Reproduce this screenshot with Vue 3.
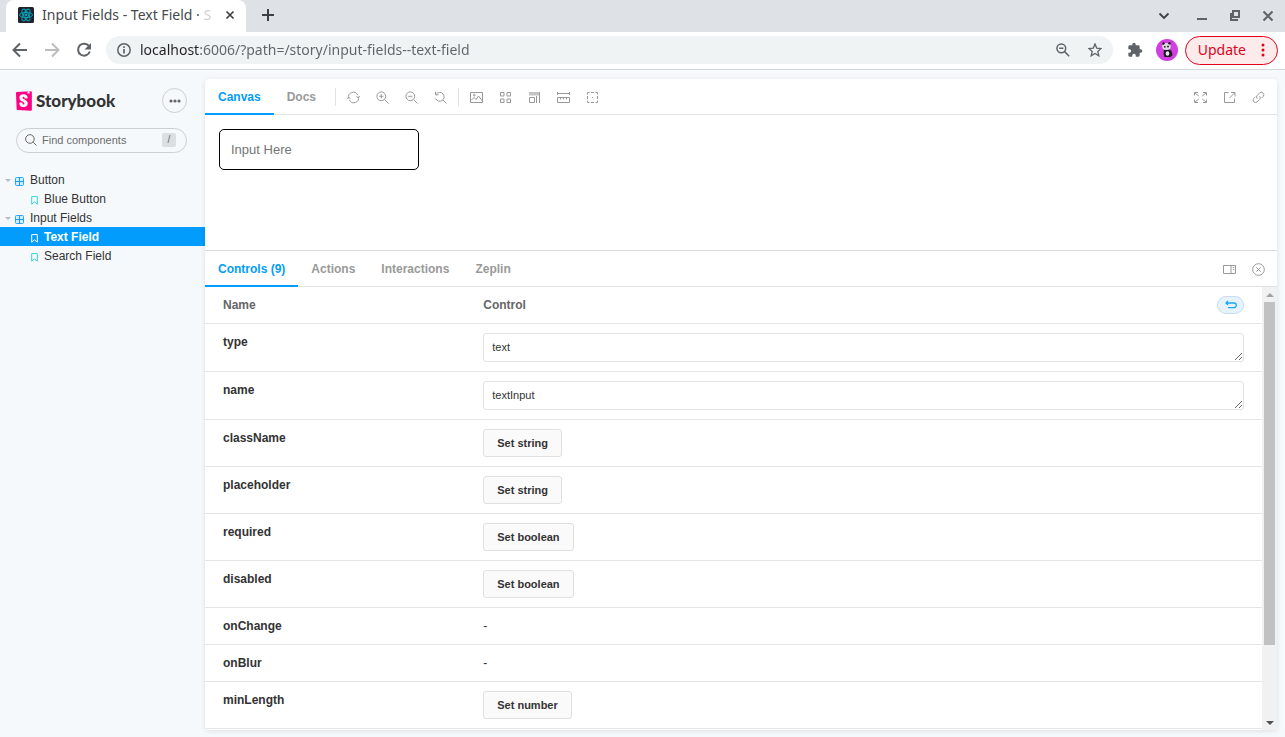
<script setup>
import { ref } from 'vue'

const query = ref('')
const address = ref('localhost:6006/?path=/story/input-fields--text-field')
const sample = ref('')

const tree = [
  { label: 'Button', kind: 'group' },
  { label: 'Blue Button', kind: 'story' },
  { label: 'Input Fields', kind: 'group' },
  { label: 'Text Field', kind: 'story', active: true },
  { label: 'Search Field', kind: 'story' },
]

const zoomTools = [
  { name: 'Remount component', d: 'M1.700 7.500A4.800 4.800 0 0 1 10.700 4.200M11.300 5.500A4.800 4.800 0 0 1 2.300 8.800M.2 7.800L1.700 6l1.700 1.800M9.600 5.200L11.300 7l1.500-1.800' },
  { name: 'Zoom in', d: 'M9.7 5.3a4.4 4.4 0 1 1-8.8 0a4.4 4.4 0 0 1 8.8 0M8.6 8.6l3.9 3.9M5.3 3.2v4.2M3.2 5.3h4.2' },
  { name: 'Zoom out', d: 'M9.7 5.3a4.4 4.4 0 1 1-8.8 0a4.4 4.4 0 0 1 8.8 0M8.6 8.6l3.9 3.9M3.2 5.3h4.2' },
  { name: 'Reset zoom', d: 'M2.2 3.2a4.4 4.4 0 1 1-.6 4.2M8.8 8.8l3.7 3.7M1.5.8v3h3' },
]
const viewTools = [
  { name: 'Change background', d: 'M.5 1.5h12v10H.5zM1 9.5l3-3 2 2 2.5-3.5 3.5 4.5M5.2 4.2a.9.9 0 1 1-1.8 0a.9.9 0 0 1 1.8 0' },
  { name: 'Apply grid', d: 'M1.5 1.5h3.5v3.5h-3.5zM8 1.5h3.5v3.5h-3.5zM1.5 8h3.5v3.5h-3.5zM8 8h3.5v3.5h-3.5z' },
  { name: 'Change viewport', d: 'M1.5 6.5h5v5h-5zM8.5 12V5M11.5 12V1', fill: 'M1 1h11v3.5H1z' },
  { name: 'Enable measure', d: 'M.5 6.5h12v5H.5zM3.5 6.5v2M6.5 6.5v2M9.5 6.5v2M.5 1v3M12.5 1v3M.5 2.5h12' },
  { name: 'Apply outlines', d: 'M1.5 3.5v-2h2M5 1.5h3M9.5 1.5h2v2M11.5 5v3M11.5 9.5v2h-2M8 11.500H5M3.5 11.5h-2v-2M1.500 8V5M6 6.500h1' },
]
const shareTools = [
  { name: 'Go full screen', d: 'M.5 4.500V1.500h3.500M1 2l3.800 3M9 1.500h3.500v3M12 2L8.200 5M.5 8.500v3h3.500M1 11l3.800-3M9 11.500h3.500v-3M12 11L8.200 8' },
  { name: 'Open canvas in new tab', d: 'M5.5 1.5h-4v10h10v-4M8 1.5h4v4M11.5 2L6.5 7' },
  { name: 'Copy canvas link', d: 'M5.3 7.7a2.4 2.4 0 0 1 0-3.4l2.5-2.5a2.5 2.5 0 0 1 3.5 3.5L9.5 7.1M7.5 5.2a2.4 2.4 0 0 1 0 3.4L5.1 11a2.5 2.5 0 0 1-3.5-3.5l1.7-1.7' },
]

const panels = ['Controls (9)', 'Actions', 'Interactions', 'Zeplin']
const args = ref([
  { name: 'type', kind: 'text', value: 'text' },
  { name: 'name', kind: 'text', value: 'textInput' },
  { name: 'className', kind: 'set', action: 'Set string' },
  { name: 'placeholder', kind: 'set', action: 'Set string' },
  { name: 'required', kind: 'set', action: 'Set boolean' },
  { name: 'disabled', kind: 'set', action: 'Set boolean' },
  { name: 'onChange', kind: 'none' },
  { name: 'onBlur', kind: 'none' },
  { name: 'minLength', kind: 'set', action: 'Set number' },
])
</script>

<template>
  <div class="window">
    <header class="tabstrip">
      <div class="page-tab">
        <svg class="favicon" viewBox="0 0 16 16" aria-hidden="true">
          <rect width="16" height="16" rx="1.5" fill="#20232a" />
          <g fill="none" stroke="#00a5bd" stroke-width="1">
            <ellipse cx="8" cy="8" rx="6.5" ry="2.6" />
            <ellipse cx="8" cy="8" rx="6.5" ry="2.6" transform="rotate(60 8 8)" />
            <ellipse cx="8" cy="8" rx="6.5" ry="2.6" transform="rotate(120 8 8)" />
          </g>
          <circle cx="8" cy="8" r="1.4" fill="#00a5bd" />
        </svg>
        <span class="page-title">Input Fields - Text Field · <span class="fade">S</span></span>
        <button class="bare" aria-label="Close tab">
          <svg width="10" height="10" viewBox="0 0 10 10"><path d="M1.5 1.5l7 7M8.5 1.5l-7 7" stroke="#3c4043" stroke-width="1.7" /></svg>
        </button>
      </div>
      <button class="bare new-tab" aria-label="New tab">
        <svg width="14" height="14" viewBox="0 0 14 14"><path d="M7 1v12M1 7h12" stroke="#3c4043" stroke-width="2" /></svg>
      </button>
      <div class="window-buttons">
        <button class="bare" aria-label="Search tabs"><svg width="12" height="12" viewBox="0 0 12 12"><path d="M1.5 3.5L6 8l4.500-4.500" fill="none" stroke="#3c4043" stroke-width="1.8" /></svg></button>
        <button class="bare" aria-label="Minimize"><svg width="12" height="12" viewBox="0 0 12 12"><path d="M1 9h10" stroke="#5f6368" stroke-width="2" /></svg></button>
        <button class="bare" aria-label="Restore"><svg width="12" height="12" viewBox="0 0 12 12"><path d="M4 1h6v6H4zM2 3v7h7" fill="none" stroke="#5f6368" stroke-width="2" /></svg></button>
        <button class="bare" aria-label="Close"><svg width="12" height="12" viewBox="0 0 12 12"><path d="M1.5 1.5l9 9M10.5 1.5l-9 9" stroke="#5f6368" stroke-width="2" /></svg></button>
      </div>
    </header>

    <div class="toolbar">
      <nav class="history">
        <button class="bare" aria-label="Back"><svg width="16" height="16" viewBox="0 0 16 16"><path d="M15 8H2M8 1.5L1.5 8 8 14.5" fill="none" stroke="#5f6368" stroke-width="2" /></svg></button>
        <button class="bare" aria-label="Forward"><svg width="16" height="16" viewBox="0 0 16 16"><path d="M1 8h13M8 1.5L14.5 8 8 14.5" fill="none" stroke="#babcbe" stroke-width="2" /></svg></button>
        <button class="bare" aria-label="Reload"><svg width="16" height="16" viewBox="0 0 16 16"><path d="M13.3 4.7A6 6 0 1 0 13.8 9.5" fill="none" stroke="#5f6368" stroke-width="2" /><path d="M15 1v6.500H8.500z" fill="#5f6368" /></svg></button>
      </nav>
      <div class="omnibox">
        <svg width="14" height="14" viewBox="0 0 14 14" aria-hidden="true"><circle cx="7" cy="7" r="6.2" fill="none" stroke="#5f6368" stroke-width="1.5" /><path d="M7 6v4.500M7 3.300v1.600" stroke="#5f6368" stroke-width="1.7" /></svg>
        <input v-model="address" class="address" type="text" aria-label="Address" spellcheck="false" />
        <button class="bare" aria-label="Zoom level"><svg width="14" height="14" viewBox="0 0 14 14"><circle cx="5.3" cy="5.3" r="4.4" fill="none" stroke="#5f6368" stroke-width="1.5" /><path d="M8.6 8.6l4.6 4.6M3.2 5.3h4.2" stroke="#5f6368" stroke-width="1.5" /></svg></button>
        <button class="bare" aria-label="Bookmark this page"><svg width="14" height="14" viewBox="0 0 14 14"><path d="M7 1l1.700 4.100 4.400.4-3.300 2.900 1 4.400L7 10.500l-3.800 2.300 1-4.400L.9 5.500l4.400-.4z" fill="none" stroke="#5f6368" stroke-width="1.3" /></svg></button>
      </div>
      <button class="bare" aria-label="Extensions">
        <svg width="16" height="16" viewBox="0 0 24 24"><path fill="#5f6368" d="M20.5 11H19V7a2 2 0 0 0-2-2h-4V3.500a2.500 2.500 0 0 0-5 0V5H4a2 2 0 0 0-2 2v3.800h1.500a2.700 2.700 0 0 1 0 5.400H2V20a2 2 0 0 0 2 2h3.800v-1.500a2.700 2.700 0 0 1 5.400 0V22H17a2 2 0 0 0 2-2v-4h1.500a2.500 2.500 0 0 0 0-5z" /></svg>
      </button>
      <button class="bare" aria-label="Profile">
        <svg width="22" height="22" viewBox="0 0 22 22">
          <circle cx="11" cy="11" r="11" fill="#d13fe0" />
          <path d="M8 11l5-1 2.500 2 1 4-2 2H8.500l-1-3z" fill="#1d1a20" />
          <ellipse cx="10.500" cy="7.500" rx="4.300" ry="3.600" fill="#dddbe0" />
          <circle cx="7.500" cy="4.500" r="1.200" fill="#1d1a20" /><circle cx="13.500" cy="4.300" r="1.200" fill="#1d1a20" />
          <circle cx="8.800" cy="7.800" r=".9" fill="#1d1a20" /><circle cx="12" cy="7.500" r=".9" fill="#1d1a20" />
          <ellipse cx="11.500" cy="14.500" rx="1.800" ry="2.200" fill="#e8e6ea" />
        </svg>
      </button>
      <button class="update">Update
        <svg width="4" height="14" viewBox="0 0 4 14" aria-hidden="true"><g fill="#e2001a"><circle cx="2" cy="2" r="1.5" /><circle cx="2" cy="7" r="1.5" /><circle cx="2" cy="12" r="1.5" /></g></svg>
      </button>
    </div>

    <div class="app">
      <aside class="sidebar">
        <div class="brand-row">
          <a class="brand" href="#">
            <svg width="16" height="20" viewBox="0 0 52 64" aria-hidden="true">
              <path d="M2 58.300L0 6.600a3.400 3.400 0 0 1 3.200-3.500L47.900.3a3.400 3.400 0 0 1 3.600 3.400v56.600a3.400 3.400 0 0 1-3.500 3.400L5.200 61.500A3.400 3.400 0 0 1 2 58.300z" fill="#ff0084" />
              <path d="M37.600.9l6.300-.4.200 7.600c0 .3-.4.400-.6.300l-2.400-1.900L38.200 8.600c-.3.300-.6 0-.6-.300z" fill="#fff" />
              <path d="M38 23c-1.500 1-10.200 1.500-10.200.2.200-4.600-2-4.800-3.200-4.800-1.200 0-3.100.4-3.100 3s2.800 4.100 6.200 5.900c4.700 2.500 10.500 5.500 10.500 13.100 0 7.200-5.900 11.200-13.400 11.200S10.300 48.500 11 37.500c.4-1.300 10.100-1 10.100 0-.1 4.500.9 5.800 3.500 5.800 2 0 2.900-1.100 2.900-3 0-2.800-3-4.500-6.500-6.500-4.700-2.700-10.100-5.700-10.100-12.500 0-6.900 4.700-11.500 13.200-11.500S38 14.400 38 23z" fill="#fff" />
            </svg>
            <span>Storybook</span>
          </a>
          <button class="menu" aria-label="Shortcuts"><svg width="12" height="4" viewBox="0 0 12 4"><g fill="#666"><circle cx="2" cy="2" r="1.6" /><circle cx="6" cy="2" r="1.6" /><circle cx="10" cy="2" r="1.6" /></g></svg></button>
        </div>
        <label class="search">
          <svg width="12" height="12" viewBox="0 0 12 12" aria-hidden="true"><path d="M9.200 5a4.300 4.300 0 1 1-8.600 0a4.300 4.300 0 0 1 8.600 0M8.200 8.200l3.300 3.300" fill="none" stroke="#666" /></svg>
          <input v-model="query" type="text" placeholder="Find components" aria-label="Find components" />
          <kbd>/</kbd>
        </label>
        <nav class="tree">
          <a v-for="item in tree" :key="item.label" href="#" :class="[item.kind, { active: item.active }]">
            <template v-if="item.kind === 'group'">
              <i class="caret"></i>
              <svg width="9" height="9" viewBox="0 0 9 9" aria-hidden="true"><rect x=".5" y=".5" width="8" height="8" rx="1" fill="#d5edff" stroke="#2aa6fb" /><path d="M4.500 0v9M0 4.500h9" stroke="#1a9cf8" /></svg>
            </template>
            <svg v-else width="7" height="9" viewBox="0 0 7 9" aria-hidden="true"><path d="M.7.600h5.600v7.600L3.500 5.800.7 8.200z" fill="none" :stroke="item.active ? '#fff' : '#37d5d3'" /></svg>
            <span>{{ item.label }}</span>
          </a>
        </nav>
      </aside>

      <main class="frame">
        <div class="bar">
          <button class="tab selected">Canvas</button>
          <button class="tab">Docs</button>
          <i class="sep"></i>
          <button v-for="t in zoomTools" :key="t.name" class="tool" :aria-label="t.name"><svg viewBox="0 0 13 13"><path :d="t.d" /></svg></button>
          <i class="sep"></i>
          <button v-for="t in viewTools" :key="t.name" class="tool" :aria-label="t.name"><svg viewBox="0 0 13 13"><path v-if="t.fill" class="solid" :d="t.fill" /><path :d="t.d" /></svg></button>
          <div class="right">
            <button v-for="t in shareTools" :key="t.name" class="tool" :aria-label="t.name"><svg viewBox="0 0 13 13"><path :d="t.d" /></svg></button>
          </div>
        </div>

        <section class="preview">
          <input v-model="sample" class="sample" type="text" placeholder="Input Here" aria-label="Input Here" />
        </section>

        <section class="addons">
          <div class="bar">
            <button v-for="(p, i) in panels" :key="p" class="tab" :class="{ selected: i === 0 }">{{ p }}</button>
            <div class="right">
              <button class="tool" aria-label="Change orientation"><svg viewBox="0 0 13 13"><path d="M.5 2.500h12v8H.5zM8 2.500v8M9.800 4.500h1.400M9.800 6.500h1.400" /></svg></button>
              <button class="tool" aria-label="Hide addons"><svg viewBox="0 0 13 13"><circle cx="6.5" cy="6.5" r="5.800" /><path d="M4.300 4.300l4.400 4.400M8.700 4.300L4.300 8.700" /></svg></button>
            </div>
          </div>
          <div class="scroller">
            <table>
              <thead>
                <tr>
                  <th scope="col">Name</th>
                  <th scope="col">
                    <div class="control-head">
                      <span>Control</span>
                      <button class="reset" aria-label="Reset controls"><svg width="12" height="10" viewBox="0 0 12 10"><path d="M3 1L1 3l2 2M1 3h8a2.300 2.300 0 0 1 0 4.600H3" fill="none" stroke="#1ea7fd" stroke-width="1.3" /></svg></button>
                    </div>
                  </th>
                </tr>
              </thead>
              <tbody>
                <tr v-for="arg in args" :key="arg.name">
                  <th scope="row"><label :for="'control-' + arg.name">{{ arg.name }}</label></th>
                  <td>
                    <textarea v-if="arg.kind === 'text'" :id="'control-' + arg.name" v-model="arg.value" rows="1"></textarea>
                    <button v-else-if="arg.kind === 'set'" :id="'control-' + arg.name" class="set">{{ arg.action }}</button>
                    <span v-else :id="'control-' + arg.name">-</span>
                  </td>
                </tr>
              </tbody>
            </table>
            <div class="scrollbar" aria-hidden="true">
              <i class="up"></i>
              <div class="track"><div class="thumb"></div></div>
              <i class="down"></i>
            </div>
          </div>
        </section>
      </main>
    </div>
  </div>
</template>

<style>
html, body { margin: 0; background: #f6f9fc; }
</style>

<style scoped>
.window, .window * { box-sizing: border-box; }
.window {
  display: flex; flex-direction: column; min-height: 100vh;
  font-family: "Liberation Sans", Arial, sans-serif; font-size: 12px; color: #333;
}
button, input, textarea { font: inherit; color: inherit; margin: 0; }
button { cursor: pointer; }
svg { display: block; flex: none; }
.bare { display: flex; align-items: center; justify-content: center; padding: 0; border: 0; background: none; }

.tabstrip { display: flex; align-items: center; height: 32px; background: #dee1e6; padding-left: 6px; }
.page-tab {
  display: flex; align-items: center; align-self: stretch; width: 240px; padding: 0 11px 2px 12px;
  background: #fff; border-radius: 8px 8px 0 0;
}
.favicon { width: 16px; height: 16px; }
.page-title { flex: 1; margin-left: 8px; white-space: nowrap; font: 14px/20px "Noto Sans", "Open Sans", sans-serif; color: #45494d; }
.fade { color: #d0d2d4; }
.new-tab { margin-left: 15px; margin-bottom: 2px; }
.window-buttons { display: flex; gap: 21px; margin-left: auto; padding-right: 11px; }
.window-buttons .bare:first-child { margin-right: 5px; }

.toolbar { display: flex; align-items: center; height: 38px; padding: 0 7px 1px 12px; background: #fff; border-bottom: 1px solid #d5d9dd; }
.history { display: flex; gap: 16px; margin-right: 14px; }
.omnibox {
  display: flex; align-items: center; flex: 1; height: 28px; margin-right: 14px; padding: 0 11px;
  border-radius: 14px; background: #eff3f3;
}
.omnibox .bare { margin-left: 18px; }
.omnibox .bare:first-of-type { margin-left: 0; }
.address {
  flex: 1; min-width: 0; padding: 0; margin-left: 9px; border: 0; outline: 0;
  font: 14px/20px "Noto Sans", "Open Sans", sans-serif; color: transparent;
  background: linear-gradient(to right, #202124 59px, #5f6368 59px); -webkit-background-clip: text; background-clip: text;
}
.toolbar > .bare { margin-right: 7px; }
.toolbar > .bare:first-of-type { margin-right: 13px; }
.update {
  display: flex; align-items: center; gap: 15px; height: 29px; padding: 0 12px;
  border: 1px solid #e2001a; border-radius: 15px; background: #fdebec; color: #e2001a;
  font: 14px/20px "Noto Sans", "Open Sans", sans-serif;
}

.app { display: flex; flex: 1; background: #f6f9fc; }
.sidebar { width: 205px; flex: none; padding-top: 18px; }
.brand-row { display: flex; align-items: center; justify-content: space-between; height: 25px; margin: 0 18px 15px 16px; }
.brand { display: flex; align-items: center; gap: 4px; color: #333; text-decoration: none; font: 900 17px/20px Lato, "Open Sans", sans-serif; }
.menu { display: flex; align-items: center; justify-content: center; width: 25px; height: 25px; padding: 0; border: 1px solid #ccd0d3; border-radius: 50%; background: none; }
.search { display: flex; align-items: center; height: 25px; margin: 0 18px 17px 16px; padding: 0 10px 1px 8px; border: 1px solid #ccd0d3; border-radius: 13px; }
.search input { flex: 1; min-width: 0; padding: 0; margin-left: 5px; border: 0; outline: 0; background: none; font-size: 11px; line-height: 16px; }
.search input::placeholder { color: #6b6c6d; opacity: 1; }
kbd { width: 14px; height: 14px; border-radius: 2px; background: #dcdfe2; color: #666; font: 10px/14px "Liberation Sans", Arial, sans-serif; text-align: center; }
.tree a { display: flex; align-items: center; height: 19px; color: #333; text-decoration: none; line-height: 20px; }
.tree svg { margin-top: 3px; }
.tree .group { padding-left: 5px; }
.tree .group svg { margin-right: 6px; }
.tree .story { padding-left: 31px; }
.tree .story svg { margin-right: 6px; }
.tree .active { background: #029cfd; color: #fff; font-weight: 700; }
.caret { margin: 2px 4px 0 0; border: solid transparent; border-width: 3px 3px 0; border-top-color: #b8bcbf; }

.frame { display: flex; flex-direction: column; flex: 1; min-width: 0; margin: 9px 8px 7px 0; background: #fff; border-radius: 4px; box-shadow: 0 1px 5px rgba(0, 0, 0, 0.1); overflow: hidden; }
.bar { display: flex; align-items: center; height: 36px; padding-right: 4px; box-shadow: inset 0 -1px #e2e2e2; }
.tab { align-self: stretch; padding: 2px 13px 0; border: 0; border-bottom: 2px solid transparent; background: none; color: #999; font-weight: 700; line-height: 16px; }
.tab.selected { color: #029cfd; border-bottom-color: #029cfd; }
.sep { width: 1px; height: 18px; margin: 0 3px; background: #e2e2e2; }
.tab + .sep { margin-left: 6px; }
.tool { display: flex; align-items: center; justify-content: center; width: 29px; height: 25px; padding: 0; border: 0; background: none; }
.tool svg { width: 13px; height: 13px; fill: none; stroke: #999; }
.tool .solid { fill: #c4c4c4; stroke: none; }
.right { display: flex; margin-left: auto; }
.preview { flex: 1; padding: 14px; }
.sample { width: 200px; height: 41px; padding: 0 11px; border: 1px solid #000; border-radius: 5px; outline: 0; background: #fff; font-size: 13px; }
.sample::placeholder { color: #757575; opacity: 1; }

.addons { border-top: 1px solid #dcdcdc; }
.scroller { display: flex; padding-bottom: 1px; }
table { flex: 1; table-layout: fixed; border-collapse: separate; border-spacing: 0; line-height: 18px; text-align: left; }
th, td { padding: 9px 18px 9px 14px; border-bottom: 1px solid #e5e5e5; vertical-align: top; }
th:first-child { width: 25%; padding-left: 18px; }
thead th { color: #666; }
.control-head { display: flex; align-items: center; justify-content: space-between; }
.reset { display: flex; align-items: center; justify-content: center; width: 27px; height: 18px; padding: 0; border: 1px solid #c9dceb; border-radius: 9px; background: #e7f3fc; }
textarea { display: block; width: 100%; height: 29px; padding: 5px 8px; border: 1px solid #e2e2e2; border-radius: 3px; outline: 0; background: #fff; font-size: 11px; line-height: 17px; overflow: hidden; resize: vertical; }
.set { display: block; height: 28px; padding: 0 13px; border: 1px solid #e0e0e0; border-radius: 3px; background: #fafafa; font-size: 11px; font-weight: 700; }
.scrollbar { display: flex; flex-direction: column; align-items: center; width: 15px; margin-bottom: -1px; background: #f1f1f1; }
.track { flex: 1; width: 11px; }
.thumb { height: 83%; background: #c1c1c1; }
.up, .down { margin: 6px 0 5px; border: solid transparent; }
.up { border-width: 0 4px 4px; border-bottom-color: #a3a3a3; }
.down { border-width: 4px 4px 0; border-top-color: #505050; }
</style>
